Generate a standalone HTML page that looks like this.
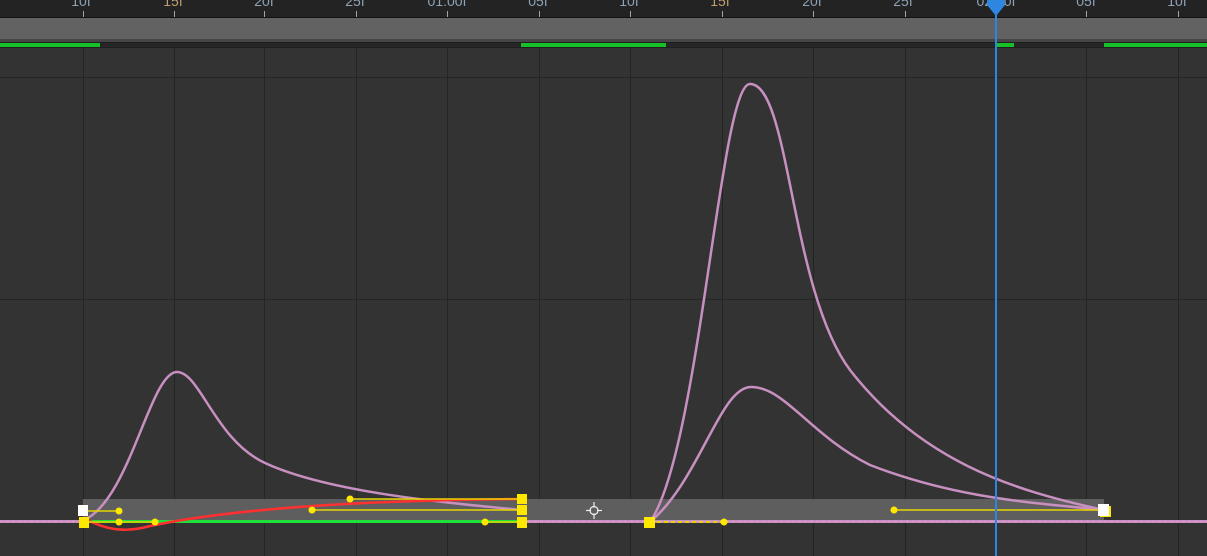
<!DOCTYPE html>
<html><head><style>
html,body{margin:0;padding:0;background:#333;}
svg{display:block}
</style></head><body>
<svg width="1207" height="556" viewBox="0 0 1207 556" xmlns="http://www.w3.org/2000/svg">
<rect x="0" y="0" width="1207" height="556" fill="#333333"/>
<rect x="0" y="0" width="1207" height="17" fill="#232323"/>
<rect x="0" y="17" width="1207" height="1" fill="#111"/>
<rect x="0" y="18" width="1207" height="21" fill="#626262"/>
<rect x="0" y="39" width="1207" height="3" fill="#464646"/>
<rect x="0" y="42" width="1207" height="6" fill="#1e1e1e"/>
<rect x="0" y="43" width="1207" height="4" fill="#262626"/>
<g fill="#18c028">
<rect x="0" y="43" width="100" height="4"/>
<rect x="521" y="43" width="145" height="4"/>
<rect x="996" y="43" width="18" height="4"/>
<rect x="1104" y="43" width="103" height="4"/>
</g>
<g stroke="#252525" stroke-width="1">
<line x1="0" y1="77.5" x2="1207" y2="77.5"/>
<line x1="0" y1="299.5" x2="1207" y2="299.5"/>
</g>
<g stroke="#242424" stroke-width="1">
<line x1="83.5" y1="48" x2="83.5" y2="556"/><line x1="174.5" y1="48" x2="174.5" y2="556"/>
<line x1="264.5" y1="48" x2="264.5" y2="556"/><line x1="356.5" y1="48" x2="356.5" y2="556"/>
<line x1="447.5" y1="48" x2="447.5" y2="556"/><line x1="539.5" y1="48" x2="539.5" y2="556"/>
<line x1="630.5" y1="48" x2="630.5" y2="556"/><line x1="722.5" y1="48" x2="722.5" y2="556"/>
<line x1="813.5" y1="48" x2="813.5" y2="556"/><line x1="905.5" y1="48" x2="905.5" y2="556"/>
<line x1="1086.5" y1="48" x2="1086.5" y2="556"/><line x1="1178.5" y1="48" x2="1178.5" y2="556"/>
</g>
<g stroke="#9aa" stroke-width="1">
<line x1="83.5" y1="11" x2="83.5" y2="17"/><line x1="174.5" y1="11" x2="174.5" y2="17"/>
<line x1="264.5" y1="11" x2="264.5" y2="17"/><line x1="356.5" y1="11" x2="356.5" y2="17"/>
<line x1="447.5" y1="11" x2="447.5" y2="17"/><line x1="539.5" y1="11" x2="539.5" y2="17"/>
<line x1="630.5" y1="11" x2="630.5" y2="17"/><line x1="722.5" y1="11" x2="722.5" y2="17"/>
<line x1="813.5" y1="11" x2="813.5" y2="17"/><line x1="905.5" y1="11" x2="905.5" y2="17"/>
<line x1="1086.5" y1="11" x2="1086.5" y2="17"/><line x1="1178.5" y1="11" x2="1178.5" y2="17"/>
</g>
<g font-family="Liberation Sans, sans-serif" font-size="14" fill="#8fa3b8" text-anchor="middle">
<text x="81" y="6">10f</text><text x="173" y="6" fill="#c0a070">15f</text>
<text x="264" y="6">20f</text><text x="355" y="6">25f</text>
<text x="447" y="6">01:00f</text><text x="538" y="6">05f</text>
<text x="629" y="6">10f</text><text x="720" y="6" fill="#c0a070">15f</text>
<text x="812" y="6">20f</text><text x="903" y="6">25f</text>
<text x="996" y="6">02:00f</text><text x="1086" y="6">05f</text><text x="1177" y="6">10f</text>
</g>
<rect x="0" y="499" width="1104" height="21" fill="#5e5e5e"/>
<rect x="0" y="499" width="83" height="21" fill="#333"/>
<rect x="0" y="520" width="1207" height="3" fill="#c890c0"/>
<line x1="0" y1="521.5" x2="1207" y2="521.5" stroke="#e89ad8" stroke-width="1" stroke-dasharray="3 3"/>
<rect x="84" y="520" width="438" height="3" fill="#1ee03a"/>
<g fill="none" stroke-linecap="round">
<path d="M84,520 C130,500 150,372 177,372 C200,372 215,440 265,463 C330,493 450,503 522,510" stroke="#c890c0" stroke-width="2.5"/>
<path d="M650,522 C700,450 720,84 750,84 C790,84 790,290 850,370 C920,460 1010,490 1104,510" stroke="#c890c0" stroke-width="2.5"/>
<path d="M650,522 C700,480 720,387 751,387 C785,387 810,435 870,465 C960,500 1040,503 1104,510" stroke="#c890c0" stroke-width="2.5"/>
<path d="M84,518 C105,530 125,533 150,526 C250,505 400,500 522,499" stroke="#ff3030" stroke-width="2.5"/>
</g>
<g stroke="#e6d600" stroke-width="1.5">
<line x1="84" y1="511" x2="119" y2="511"/>
<line x1="350" y1="499" x2="522" y2="499"/>
<line x1="312" y1="510" x2="522" y2="510"/>
<line x1="84" y1="522" x2="155" y2="522"/>
<line x1="485" y1="522" x2="522" y2="522"/>
<line x1="894" y1="510" x2="1104" y2="510"/>
<line x1="650" y1="522" x2="724" y2="522" stroke-dasharray="4 3" stroke-width="2"/>
</g>
<g fill="#ffe800">
<circle cx="119" cy="511" r="3.5"/><circle cx="119" cy="522" r="3.5"/><circle cx="155" cy="522" r="3.5"/>
<circle cx="350" cy="499" r="3.5"/><circle cx="312" cy="510" r="3.5"/><circle cx="485" cy="522" r="3.5"/>
<circle cx="894" cy="510" r="3.5"/><circle cx="724" cy="522" r="3.5"/>
<rect x="79" y="517" width="10" height="11"/>
<rect x="517" y="494" width="10" height="10"/><rect x="517" y="505" width="10" height="10"/><rect x="517" y="517" width="10" height="11"/>
<rect x="644" y="517" width="11" height="11"/>
<rect x="1100" y="506" width="11" height="11"/>
</g>
<rect x="78" y="505" width="10" height="11" fill="#fff"/>
<rect x="1098" y="504" width="11" height="12" fill="#fff"/>
<g stroke="#eee" stroke-width="1.2" fill="none">
<circle cx="594" cy="510.5" r="4"/>
<line x1="594" y1="502" x2="594" y2="519"/><line x1="586" y1="510.5" x2="602" y2="510.5"/>
</g>
<circle cx="594" cy="510.5" r="3" fill="#5e5e5e"/>
<rect x="995" y="0" width="2" height="556" fill="#2f86e0"/>
<path d="M987,0 L1005,0 L1005,5 L996,16 L987,5 Z" fill="#2f86e0"/>
</svg>
</body></html>
